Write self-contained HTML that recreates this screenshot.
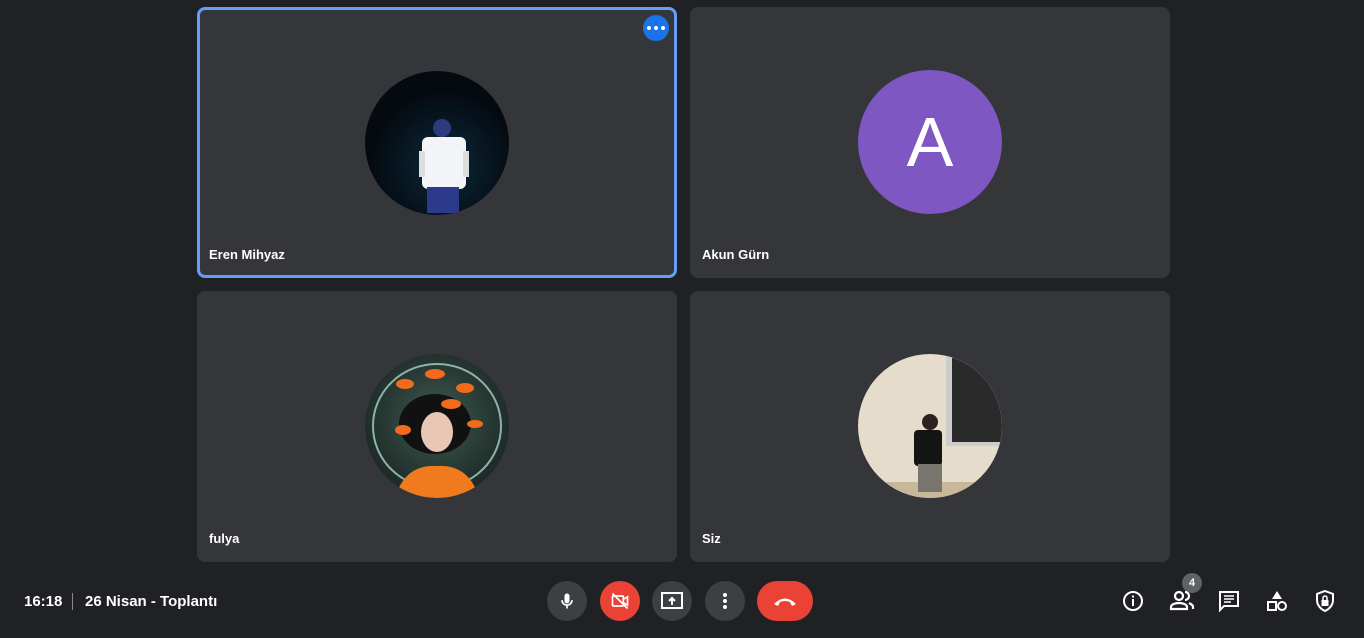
<!DOCTYPE html>
<html><head><meta charset="utf-8"><style>
*{margin:0;padding:0;box-sizing:border-box}
body{width:1364px;height:638px;background:#202124;position:relative;overflow:hidden;font-family:"Liberation Sans",sans-serif;color:#fff}
.t{position:absolute;background:#3c4043;background:#35363a;border-radius:8px;width:480px;height:271px}
.n{position:absolute;left:12px;bottom:16px;font-size:13px;font-weight:bold}
.av{position:absolute;left:168px;top:63px;width:144px;height:144px;border-radius:50%;overflow:hidden}
.b{position:absolute;top:581px;width:40px;height:40px;border-radius:20px;background:#3c4043;display:flex;align-items:center;justify-content:center}
.i{position:absolute;top:589px}
</style></head><body>
<div class="t" style="left:197px;top:7px;border:3px solid #669df6">
 <div style="position:absolute;right:5px;top:5px;width:26px;height:26px;border-radius:50%;background:#1a73e8;display:flex;align-items:center;justify-content:center;gap:3px"><i style="width:4px;height:4px;background:#fff;border-radius:50%"></i><i style="width:4px;height:4px;background:#fff;border-radius:50%"></i><i style="width:4px;height:4px;background:#fff;border-radius:50%"></i></div>
 <div class="av" style="left:165px;top:61px;background:radial-gradient(circle at 55% 65%,#0b2a3a 0,#050a10 60%)">
  <svg width="144" height="144"><rect x="57" y="66" width="44" height="52" rx="6" fill="#f2f4f8"/><rect x="62" y="116" width="32" height="26" fill="#2c3a8c"/><circle cx="77" cy="57" r="9" fill="#2c3a80"/><rect x="54" y="80" width="6" height="26" fill="#ddd"/><rect x="98" y="80" width="6" height="26" fill="#ddd"/></svg>
 </div>
 <div class="n" style="left:9px;bottom:13px">Eren Mihyaz</div>
</div>
<div class="t" style="left:690px;top:7px">
 <div class="av" style="background:#7e57c2;display:flex;align-items:center;justify-content:center;font-size:70px">A</div>
 <div class="n">Akun Gürn</div>
</div>
<div class="t" style="left:197px;top:291px">
 <div class="av" style="background:radial-gradient(circle at 50% 45%,#3e5a50 0,#1e2b28 70%)">
  <svg width="144" height="144"><ellipse cx="72" cy="72" rx="64" ry="62" fill="none" stroke="#8fb3a8" stroke-width="2"/><ellipse cx="70" cy="70" rx="36" ry="30" fill="#111"/><ellipse cx="72" cy="78" rx="16" ry="20" fill="#e8c7b5"/><path d="M30 144 Q40 110 72 112 Q104 110 114 144Z" fill="#f07b1e"/><g fill="#f26a1b"><ellipse cx="40" cy="30" rx="9" ry="5"/><ellipse cx="70" cy="20" rx="10" ry="5"/><ellipse cx="100" cy="34" rx="9" ry="5"/><ellipse cx="86" cy="50" rx="10" ry="5"/><ellipse cx="38" cy="76" rx="8" ry="5"/><ellipse cx="110" cy="70" rx="8" ry="4"/></g></svg>
 </div>
 <div class="n">fulya</div>
</div>
<div class="t" style="left:690px;top:291px">
 <div class="av" style="background:#e6dccb">
  <svg width="144" height="144"><rect x="88" y="0" width="56" height="92" fill="#ccc"/><rect x="94" y="4" width="50" height="84" fill="#2a2a2a"/><rect x="0" y="128" width="144" height="16" fill="#c8b89a"/><circle cx="72" cy="68" r="8" fill="#2b2220"/><rect x="56" y="76" width="28" height="36" rx="4" fill="#141414"/><rect x="60" y="110" width="24" height="28" fill="#77756d"/></svg>
 </div>
 <div class="n">Siz</div>
</div>
<div style="position:absolute;left:24px;top:593px;font-size:15px;font-weight:bold">16:18</div>
<div style="position:absolute;left:72px;top:593px;width:1px;height:17px;background:#888"></div>
<div style="position:absolute;left:85px;top:593px;font-size:15px;font-weight:bold">26 Nisan - Toplantı</div>
<div class="b" style="left:547px"><svg width="20" height="20" viewBox="0 0 24 24" fill="#fff"><rect x="9" y="3" width="6" height="12" rx="3"/><path d="M6 11a6 6 0 0012 0" fill="none" stroke="#fff" stroke-width="2"/><rect x="11" y="17" width="2" height="4"/></svg></div>
<div class="b" style="left:600px;background:#ea4335"><svg width="20" height="20" viewBox="0 0 24 24" fill="none" stroke="#fff" stroke-width="2"><rect x="3" y="6" width="13" height="12" rx="1"/><path d="M16 10l5-3v10l-5-3"/><path d="M3 3l18 18"/></svg></div>
<div class="b" style="left:652px"><svg width="24" height="20" viewBox="0 0 24 20" fill="none" stroke="#fff" stroke-width="2"><rect x="2" y="2" width="20" height="15"/><path d="M12 14V8M9 10l3-3 3 3" fill="#fff"/></svg></div>
<div class="b" style="left:705px"><svg width="6" height="20"><circle cx="3" cy="4" r="2" fill="#fff"/><circle cx="3" cy="10" r="2" fill="#fff"/><circle cx="3" cy="16" r="2" fill="#fff"/></svg></div>
<div class="b" style="left:757px;width:56px;background:#ea4335"><svg width="26" height="12" viewBox="0 0 26 12"><path d="M2 9 Q13 -2 24 9 L20 11 L18 7 Q13 5 8 7 L6 11Z" fill="#fff"/></svg></div>
<svg class="i" style="left:1121px" width="24" height="24" viewBox="0 0 24 24"><circle cx="12" cy="12" r="9" fill="none" stroke="#fff" stroke-width="2"/><rect x="11" y="10" width="2" height="7" fill="#fff"/><rect x="11" y="6.5" width="2" height="2" fill="#fff"/></svg>
<div style="position:absolute;left:1182px;top:573px;width:20px;height:20px;border-radius:50%;background:#5f6368;font-size:11px;font-weight:bold;text-align:center;line-height:20px">4</div>
<svg class="i" style="left:1169px;top:590px" width="26" height="22" viewBox="0 0 26 22"><circle cx="10" cy="6" r="4" fill="none" stroke="#fff" stroke-width="2.2"/><path d="M2 19v-2c0-3 5-4 8-4s8 1 8 4v2z" fill="none" stroke="#fff" stroke-width="2.2"/><path d="M16 2a4 4 0 010 8M20 13c2 1 4 2 4 4v2" fill="none" stroke="#fff" stroke-width="2.2"/></svg>
<svg class="i" style="left:1217px" width="24" height="24" viewBox="0 0 24 24"><path d="M3 3h18v14H7l-4 4z" fill="none" stroke="#fff" stroke-width="2"/><path d="M7 7h10M7 10h10M7 13h7" stroke="#fff" stroke-width="1.6"/></svg>
<svg class="i" style="left:1265px" width="24" height="24" viewBox="0 0 24 24"><path d="M12 2l5 8H7z" fill="#fff"/><rect x="3" y="13" width="8" height="8" fill="none" stroke="#fff" stroke-width="2"/><circle cx="17" cy="17" r="4" fill="none" stroke="#fff" stroke-width="2"/></svg>
<svg class="i" style="left:1313px" width="24" height="24" viewBox="0 0 24 24"><path d="M12 2l8 3v6c0 5-3.5 9-8 11-4.5-2-8-6-8-11V5z" fill="none" stroke="#fff" stroke-width="2"/><rect x="8.5" y="11" width="7" height="6" fill="#fff"/><path d="M10 11V9a2 2 0 014 0v2" fill="none" stroke="#fff" stroke-width="1.5"/></svg>
</body></html>
